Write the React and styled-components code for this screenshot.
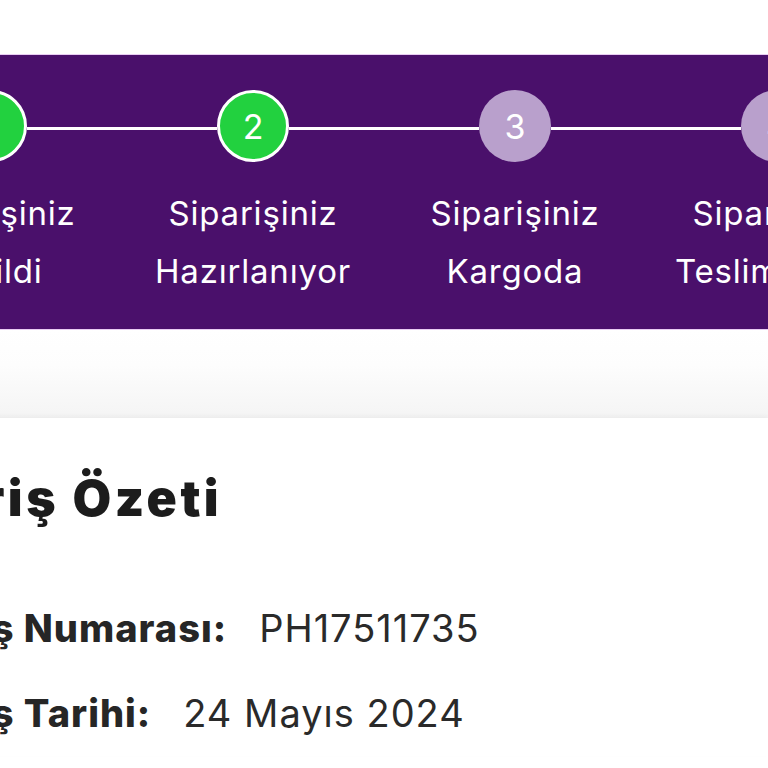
import styled, { createGlobalStyle } from 'styled-components'

const GlobalStyle = createGlobalStyle`
  body {
    margin: 0;
    background: #ffffff;
    font-family: 'Inter', 'Noto Sans', sans-serif;
    overflow: hidden;
  }
`

const Page = styled.div`
  width: 768px;
  height: 768px;
  overflow: hidden;
  padding-top: 54px;
  box-sizing: border-box;
`

const Band = styled.section`
  height: 276px;
  background: #4a106b;
  border-top: 1px solid #e9cdf3;
  border-bottom: 1px solid #e9cdf3;
  box-sizing: border-box;
  overflow: hidden;
`

const Steps = styled.div`
  display: flex;
  margin-left: -140px;
  padding-top: 35px;
`

const Step = styled.div`
  flex: 0 0 262px;
  display: flex;
  flex-direction: column;
  align-items: center;
`

const Track = styled.div`
  width: 100%;
  display: flex;
  align-items: center;
`

const Rail = styled.div`
  flex: 1;
  height: 3px;
  margin-top: 4px;
  background: ${({ $hidden }) => ($hidden ? 'transparent' : '#ffffff')};
`

const Circle = styled.div`
  flex: 0 0 auto;
  width: 72px;
  height: 72px;
  box-sizing: border-box;
  border-radius: 50%;
  display: flex;
  align-items: center;
  justify-content: center;
  font-size: 34px;
  color: #ffffff;
  background: ${({ $done }) => ($done ? '#22d13f' : '#b9a0cc')};
  border: ${({ $done }) => ($done ? '3px solid #ffffff' : 'none')};
`

const Label = styled.div`
  margin-top: 22px;
  font-size: 33px;
  letter-spacing: 0.8px;
  line-height: 58px;
  color: #ffffff;
  text-align: center;
  white-space: nowrap;
`

const Shade = styled.div`
  height: 88px;
  background: linear-gradient(#ffffff 0%, #fdfdfd 40%, #f4f4f4 100%);
`

const Card = styled.section`
  background: #ffffff;
  box-shadow: 0 -2px 4px rgba(0, 0, 0, 0.04);
  margin-left: -124px;
  padding-top: 50px;
`

const Title = styled.h2`
  margin: 0 0 58px -18px;
  font-size: 50px;
  letter-spacing: 3.5px;
  line-height: 60px;
  font-weight: 900;
  color: #1c1c1c;
`

const InfoRow = styled.div`
  display: flex;
  align-items: baseline;
  gap: 32px;
  font-size: 38px;
  letter-spacing: 1px;
  line-height: 85px;
  color: #2a2a2a;
`

const InfoLabel = styled.span`
  font-weight: 800;
  color: #262626;
`

const InfoValue = styled.span`
  font-weight: 400;
`

const steps = [
  { n: 1, a: 'Siparişiniz', b: 'Verildi', done: true },
  { n: 2, a: 'Siparişiniz', b: 'Hazırlanıyor', done: true },
  { n: 3, a: 'Siparişiniz', b: 'Kargoda', done: false },
  { n: 4, a: 'Siparişiniz', b: 'Teslim Edildi', done: false },
]

const App = () => {
  return (
    <Page>
      <GlobalStyle />
      <Band>
        <Steps>
          {steps.map((s, i) => (
            <Step key={s.n}>
              <Track>
                <Rail $hidden={i === 0} />
                <Circle $done={s.done}>{s.n}</Circle>
                <Rail $hidden={i === steps.length - 1} />
              </Track>
              <Label>
                {s.a}
                <br />
                {s.b}
              </Label>
            </Step>
          ))}
        </Steps>
      </Band>
      <Shade />
      <Card>
        <Title>Sipariş Özeti</Title>
        <InfoRow>
          <InfoLabel>Sipariş Numarası:</InfoLabel>
          <InfoValue>PH17511735</InfoValue>
        </InfoRow>
        <InfoRow>
          <InfoLabel>Sipariş Tarihi:</InfoLabel>
          <InfoValue>24 Mayıs 2024</InfoValue>
        </InfoRow>
      </Card>
    </Page>
  )
}

export default App
